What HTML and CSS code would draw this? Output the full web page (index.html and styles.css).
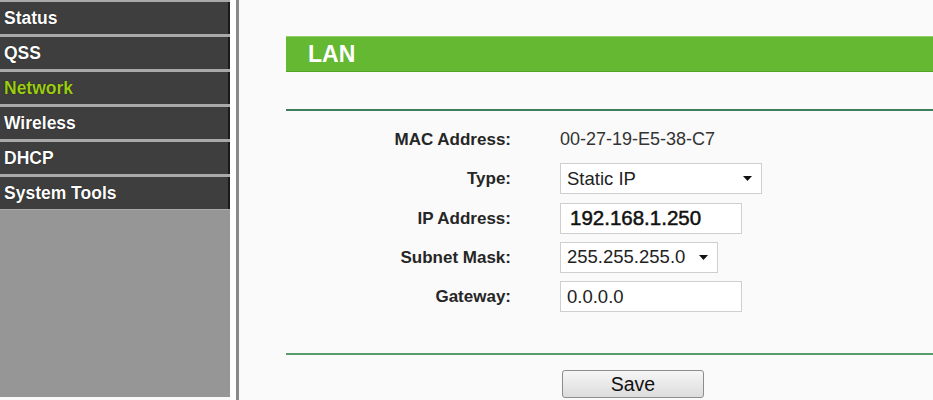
FILE: index.html
```html
<!DOCTYPE html>
<html>
<head>
<meta charset="utf-8">
<link rel="stylesheet" href="styles.css">
</head>
<body>
<div class="page">
  <nav class="sidebar">
    <ul class="menu">
      <li class="item">Status</li>
      <li class="item">QSS</li>
      <li class="item active">Network</li>
      <li class="item">Wireless</li>
      <li class="item">DHCP</li>
      <li class="item">System Tools</li>
    </ul>
    <div class="filler"></div>
  </nav>
  <div class="gutter"></div>
  <main class="main">
    <div class="header">LAN</div>
    <hr class="rule top">
    <div class="form">
      <div class="label">MAC Address:</div>
      <div class="value text">00-27-19-E5-38-C7</div>

      <div class="label">Type:</div>
      <div class="value"><div class="select type"><span>Static IP</span><svg class="arrow" width="9" height="5" viewBox="0 0 9 5"><path d="M0 0h9L4.5 5z" fill="#111"/></svg></div></div>

      <div class="label">IP Address:</div>
      <div class="value"><div class="input ip">192.168.1.250</div></div>

      <div class="label">Subnet Mask:</div>
      <div class="value"><div class="select mask"><span>255.255.255.0</span><svg class="arrow" width="9" height="5" viewBox="0 0 9 5"><path d="M0 0h9L4.5 5z" fill="#111"/></svg></div></div>

      <div class="label">Gateway:</div>
      <div class="value"><div class="input">0.0.0.0</div></div>
    </div>
    <hr class="rule bottom">
    <div class="actions">
      <button class="save">Save</button>
    </div>
  </main>
</div>
</body>
</html>
```
FILE: styles.css
```css
html, body {
  margin: 0;
  padding: 0;
  background: #fafafa;
  font-family: "Liberation Sans", Arial, sans-serif;
  overflow: hidden;
}
.page {
  display: flex;
  width: 933px;
  height: 400px;
}
.sidebar {
  width: 230px;
  height: 397px;
  display: flex;
  flex-direction: column;
  background: #a9a9a9;
  flex: none;
}
.menu {
  list-style: none;
  margin: 0;
  padding: 2px 0 0 0;
  display: flex;
  flex-direction: column;
  gap: 3px;
}
.item {
  height: 32px;
  line-height: 32px;
  background: #3e3e3e;
  border-right: 2px solid #1a1a1a;
  color: #ffffff;
  font-weight: bold;
  font-size: 17.5px;
  padding-left: 4px;
  text-shadow: 0 0 1px #000;
}
.item.active {
  color: #9ccc14;
}
.filler {
  flex: 1;
  margin-top: 1px;
  background: #969696;
}
.gutter {
  width: 6px;
  background: #ffffff;
  border-right: 3px solid #8a8a8a;
  flex: none;
}
.main {
  flex: 1;
  padding: 36px 0 0 47px;
  display: flex;
  flex-direction: column;
  min-width: 0;
}
.header {
  height: 34px;
  background: #65b832;
  border-top: 1px solid #93cf6b;
  border-bottom: 1px solid #4ea624;
  color: #ffffff;
  font-weight: bold;
  font-size: 23px;
  line-height: 34px;
  padding-left: 22px;
}
.rule {
  border: 0;
  margin: 0;
  height: 2px;
}
.rule.top {
  margin-top: 37px;
  background: #3f7e5c;
}
.form {
  display: grid;
  grid-template-columns: 225px 1fr;
  grid-auto-rows: 31px;
  column-gap: 49px;
  row-gap: 8.3px;
  padding-top: 13px;
}
.label {
  text-align: right;
  font-weight: bold;
  font-size: 17px;
  color: #262626;
  line-height: 31px;
}
.value {
  display: flex;
  align-items: center;
}
.value.text {
  font-size: 18px;
  color: #333;
}
.select, .input {
  box-sizing: border-box;
  height: 31px;
  border: 1px solid #cfcfcf;
  background: #ffffff;
  font-size: 18.5px;
  color: #222;
  display: flex;
  align-items: center;
  padding-left: 6px;
}
.select {
  justify-content: space-between;
  padding-right: 9px;
}
.select.type { width: 202px; }
.select.mask { width: 158px; }
.input { width: 182px; }
.input.ip {
  font-size: 20.5px;
  color: #111;
  -webkit-text-stroke: 0.5px #111;
  padding-left: 9px;
}
.rule.bottom {
  margin-top: 41px;
  background: #5a9d6c;
}
.actions {
  padding: 15px 0 0 276px;
}
.save {
  width: 142px;
  height: 28px;
  border: 1px solid #8d8d8d;
  border-radius: 3px;
  background: linear-gradient(#f6f6f6, #dcdcdc);
  font-family: "Liberation Sans", Arial, sans-serif;
  font-size: 19.5px;
  color: #111;
  padding: 0;
  line-height: 26px;
}
```
